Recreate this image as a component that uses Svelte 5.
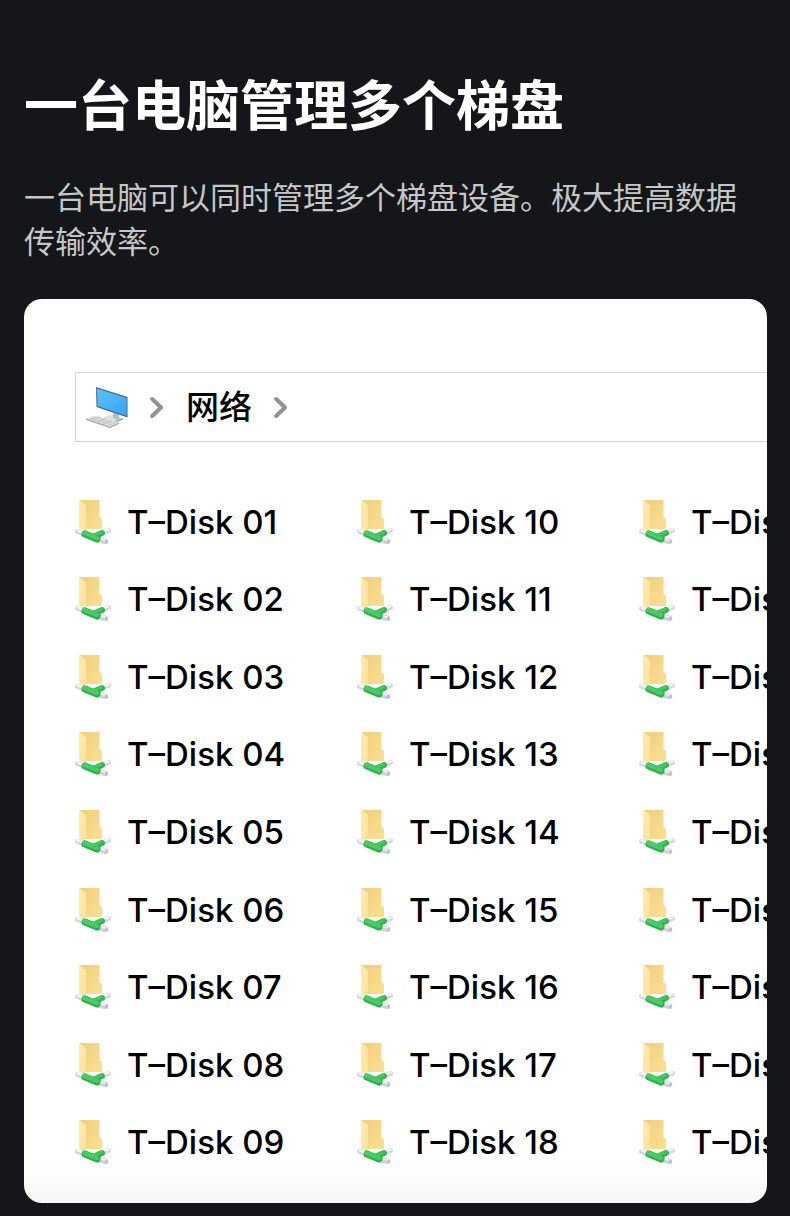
<script lang="ts">
  const disks = Array.from({ length: 27 }, (_, i) => String(i + 1).padStart(2, '0'))
</script>

<svelte:head>
  <title>一台电脑管理多个梯盘</title>
</svelte:head>

{#snippet chevron()}
  <svg class="chevron" viewBox="0 0 14 24" aria-hidden="true">
    <path d="M2.200 4 11 12.500 2.200 21" />
  </svg>
{/snippet}

<section class="feature">
  <h1>一台电脑管理多个梯盘</h1>
  <p>一台电脑可以同时管理多个梯盘设备。极大提高数据传输效率。</p>

  <div class="card">
    <nav class="path">
      <svg class="computer" viewBox="0 0 42 42" aria-hidden="true">
        <path d="M18 31 28 28 37 32.500 35 35 28 36 19 33.500z" fill="#dde1e4" />
        <path d="M27 27v5l6 2v-6z" fill="#b5bcc1" />
        <path d="M18 32.500 28 35.500 37 32v1.500l-9 3.300-10-2.800z" fill="#9ba2a7" />
        <path d="M10 1 41.500 11v20.500L10.500 21z" fill="#4d6474" />
        <path d="M11 2.600 40.500 12v18L11.500 20z" fill="url(#screen)" />
        <path d="M11.500 20 40.500 30V12L26 21z" fill="#2599ee" opacity="0.150" />
        <path d="M0 32.500 10 29.500 33 36.500 24 40.500z" fill="#dcdfe1" />
        <path d="m0 32.500 24 8 9-4v1.200L24 42 0 34z" fill="#a3a8ad" />
        <path d="m4 32 22 7M7 31l22 6.500M5 34l9-3.500M11 36l9-3.500M17 38l9-3.500" stroke="#b5babe" stroke-width="0.600" />
      </svg>
      {@render chevron()}
      <a href="#network">网络</a>
      {@render chevron()}
    </nav>

    <ul class="disks">
      {#each disks as disk (disk)}
        <li>
          <svg class="folder" viewBox="0 0 36 44" aria-hidden="true">
            <path d="M4.500 0H24.500V17l2.500 2v9.500l-1 .500H4.500z" fill="url(#back)" />
            <path d="m4.500 0 6.500 5v22l-2 4-4.500-2z" fill="url(#flap)" />
            <g fill="none" stroke-linecap="round">
              <path d="M2.500 31.500 9 34M28 32.500l5.500-2" stroke="#d3d8db" stroke-width="5" />
              <path d="m2.500 30.500 5.500 2M28 31.200l5.500-1.700" stroke="#f5f7f7" stroke-width="2" />
              <path d="m24 39.500 6.500 2" stroke="#cdd3d7" stroke-width="5.500" />
              <path d="m25 38.500 5.500 1.700" stroke="#f2f4f5" stroke-width="1.800" />
              <path d="m18 37 9-4" stroke="#36b652" stroke-width="6" />
              <path d="m10 34 12 5" stroke="#2fae4b" stroke-width="7" />
              <path d="m9.500 33 12.500 5" stroke="#48cd64" stroke-width="4.500" />
              <path d="m19 35.500 7.500-3.300" stroke="#45c85f" stroke-width="2.500" />
            </g>
            <ellipse cx="31.500" cy="41.500" rx="1.500" ry="2" fill="#bbc3c8" />
          </svg>
          <span>T–Disk {disk}</span>
        </li>
      {/each}
    </ul>
  </div>

  <!-- gradients shared by the icons -->
  <svg class="defs" width="0" height="0" aria-hidden="true">
    <defs>
      <linearGradient id="screen" x1="0" y1="0" x2="1" y2="1">
        <stop offset="0" stop-color="#5abfff" />
        <stop offset="1" stop-color="#3aa8f7" />
      </linearGradient>
      <linearGradient id="back" x1="0" y1="0" x2="1" y2="1">
        <stop offset="0" stop-color="#f0cf7c" />
        <stop offset="1" stop-color="#fbdf91" />
      </linearGradient>
      <linearGradient id="flap" x1="0" y1="0" x2="1" y2="1">
        <stop offset="0" stop-color="#ffebb0" />
        <stop offset="1" stop-color="#fce29b" />
      </linearGradient>
    </defs>
  </svg>
</section>

<style>
  :global(body) {
    margin: 0;
    background: #141619;
  }

  .feature {
    padding: 67px 23px 13px 24px;
    font-family: Inter, 'Noto Sans CJK SC', sans-serif;
  }

  h1 {
    margin: 0;
    color: #fff;
    font-size: 54px;
    font-weight: 700;
    line-height: 80px;
  }

  p {
    margin: 29px 0 35px;
    color: #c5c6c8;
    font-size: 31px;
    font-weight: 400;
    line-height: 44px;
  }

  .card {
    overflow: hidden;
    padding: 73px 0 22px 51px;
    border-radius: 18px;
    background: linear-gradient(to top, #f7f7f7, #fff 40px);
  }

  .path {
    display: flex;
    align-items: center;
    gap: 22px;
    box-sizing: border-box;
    height: 70px;
    padding-left: 10px;
    border: 1px solid #d5d5d5;
    border-right: 0;
  }

  .path a {
    color: #000;
    font-size: 33px;
    font-weight: 500;
    line-height: 48px;
    text-decoration: none;
  }

  .computer {
    width: 42px;
    height: 42px;
  }

  .chevron {
    width: 14px;
    height: 24px;
    fill: none;
    stroke: #929292;
    stroke-width: 4;
    stroke-linecap: round;
    stroke-linejoin: round;
  }

  .disks {
    display: grid;
    grid-auto-flow: column;
    grid-template-rows: repeat(9, 1fr);
    grid-auto-columns: 282px;
    min-height: 698px;
    margin: 41px 0 0;
    padding: 0;
    list-style: none;
  }

  .disks li {
    display: flex;
    align-items: center;
    gap: 16px;
    color: #000;
    font-size: 33px;
    font-weight: 500;
    line-height: 44px;
    white-space: nowrap;
  }

  .folder {
    width: 36px;
    height: 44px;
  }

  .defs {
    position: absolute;
  }
</style>
